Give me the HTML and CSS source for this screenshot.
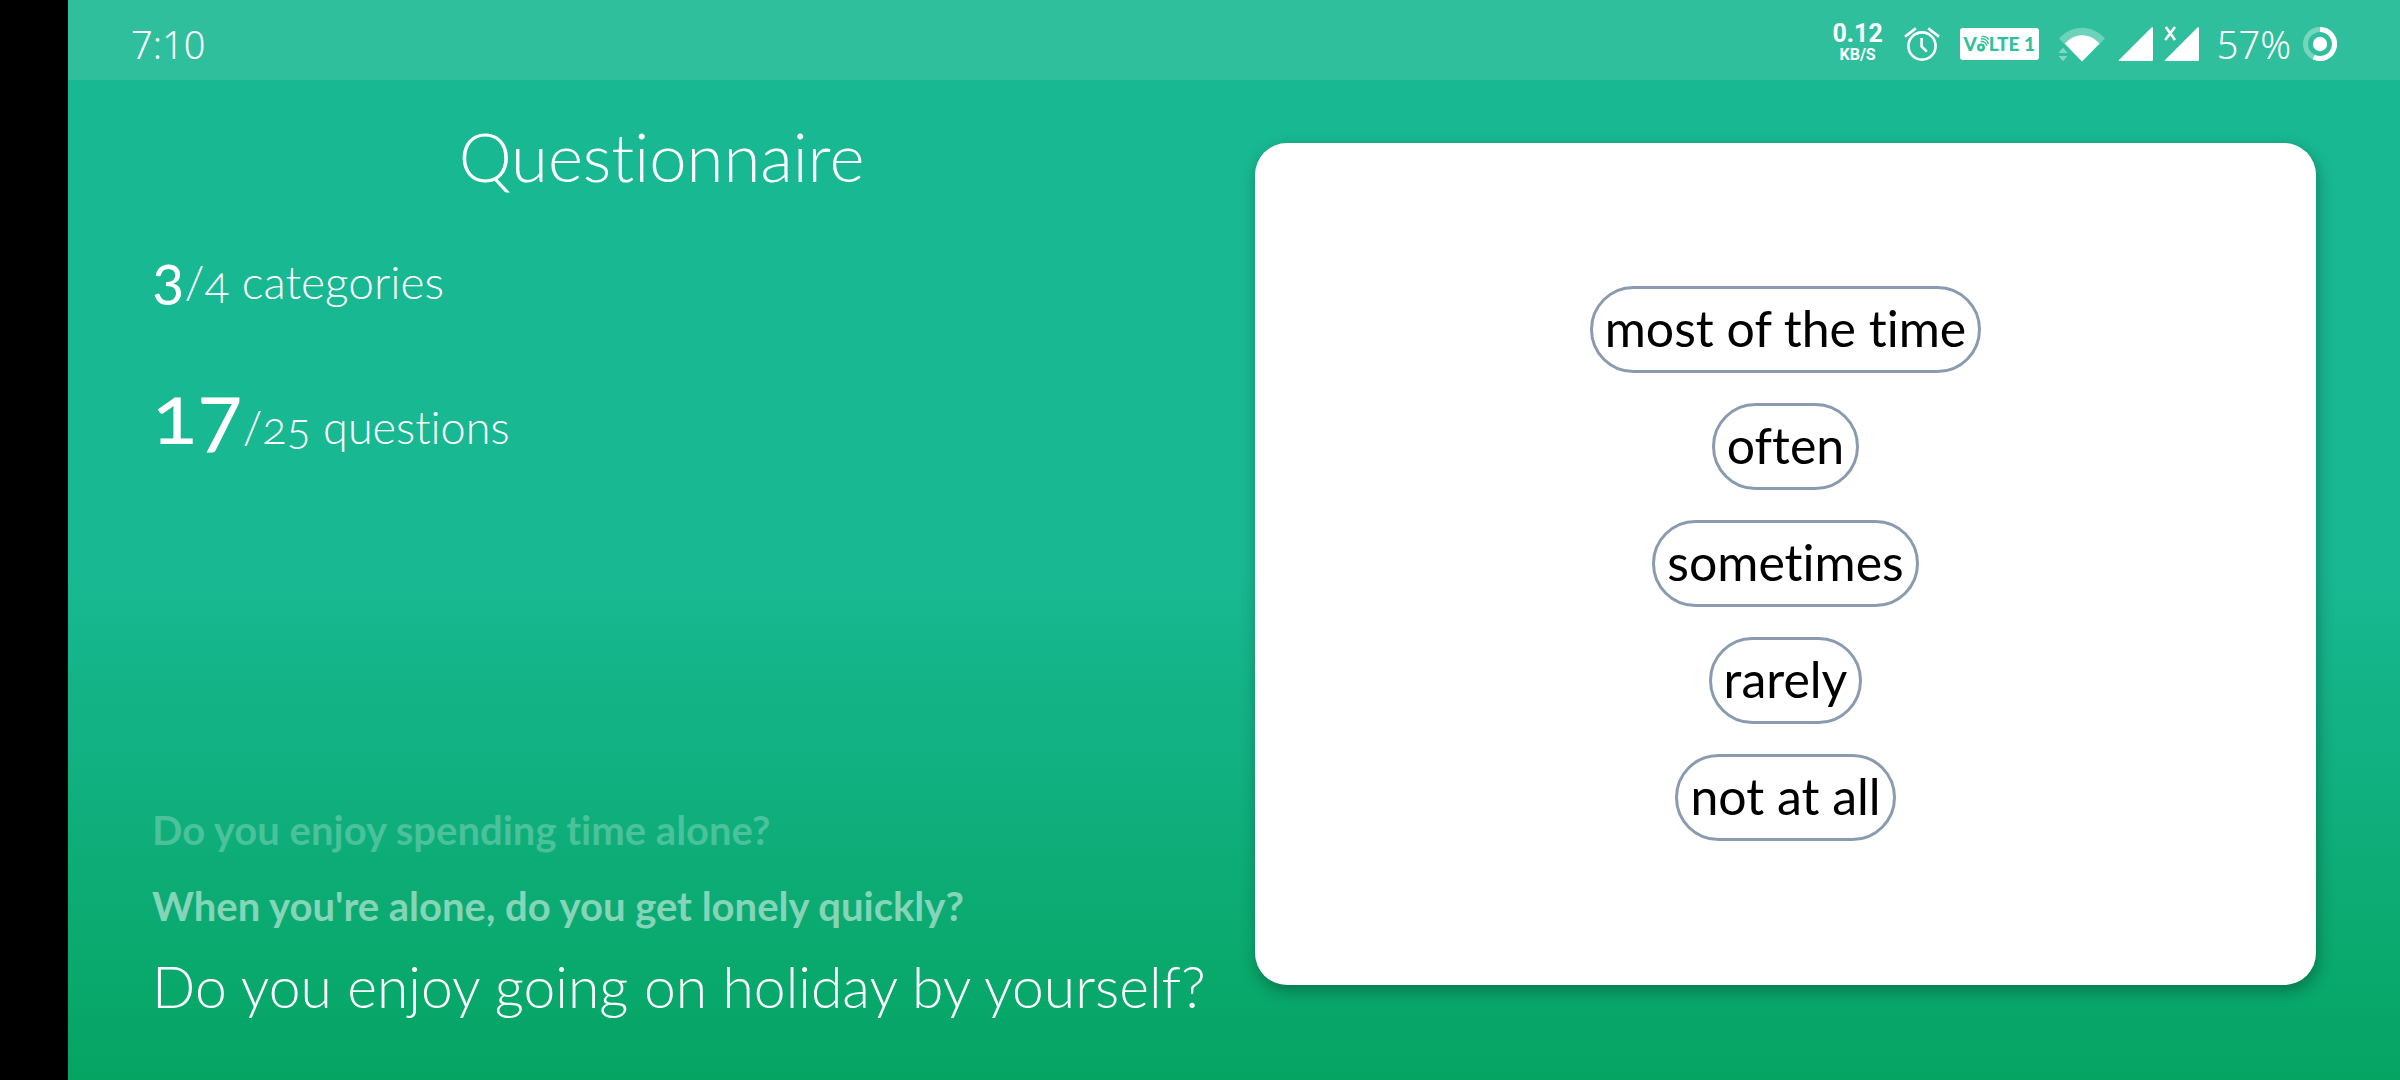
FILE: index.html
```html
<!DOCTYPE html>
<html lang="en">
<head>
<meta charset="utf-8">
<meta name="viewport" content="width=device-width, initial-scale=1">
<title>Questionnaire</title>
<link rel="stylesheet" href="styles.css">
</head>
<body>
<div class="screen">
  <header class="status">
    <time class="clock">7:10</time>
    <div class="indicators">
      <div class="speed"><span class="speed-value">0.12</span><span class="speed-unit">KB/S</span></div>
      <svg class="alarm" width="36" height="36" viewBox="0 0 36 36" fill="none" stroke="#fff" stroke-width="2.6" aria-hidden="true">
        <circle cx="18" cy="20" r="13.6"/>
        <path d="M17.6 12v8.4l5.2 5.2M1 10.6 11.8 2.4M24.2 2.4 35 10.6"/>
      </svg>
      <div class="volte">
        <span>V</span>
        <svg width="12" height="18" viewBox="0 0 12 18" fill="none" stroke="currentColor" aria-hidden="true">
          <circle cx="4" cy="12.4" r="2.7" stroke-width="2.6"/>
          <path d="M3.600 6.600c2.800-.6 5.400 1.400 6.200 4M4 3.900c3.600-.4 6.500 1.800 7.300 5" stroke-width="1.500"/>
          <path d="M4.500 1.600c3.500-.6 5.700.8 7.200 3" stroke-width="1.200"/>
        </svg>
        <span>LTE 1</span>
      </div>
      <svg class="wifi" width="48" height="36" viewBox="0 0 48 36" fill="#fff" aria-hidden="true">
        <path d="M1 12.500C14-1.800 34-1.800 47 12.500L24 35.500z" opacity=".3"/>
        <path d="M6.800 17.500C17 6.400 31.500 6.400 41.500 17.500L24 35.500z"/>
        <path d="M.5 27 5 21.500 9.500 27zM.5 30h9L5 35.300z" opacity=".4"/>
      </svg>
      <svg class="signal" width="35" height="36" viewBox="0 0 35 36" fill="#fff" aria-hidden="true">
        <path d="M33.500 1.600Q35 .4 35 2.400V33.500Q35 35 33.500 35H1.600Q0 35 1 34z"/>
      </svg>
      <svg class="signal-second" width="35" height="36" viewBox="0 0 35 36" fill="#fff" aria-hidden="true">
        <path d="M33.500 1.600Q35 .4 35 2.400V33.500Q35 35 33.500 35H1.600Q0 35 1 34z"/>
        <path d="M1.800 1 11 14M11 1 1.200 14" stroke="#fff" stroke-width="2.600"/>
      </svg>
      <span class="battery-level">57%</span>
      <svg class="battery" width="34" height="34" viewBox="0 0 34 34" fill="none" stroke="#fff" aria-hidden="true">
        <circle cx="17" cy="17" r="14.500" stroke-width="5" opacity=".35"/>
        <path d="M17 2.500a14.500 14.500 0 1 1-6.200 27.600" stroke-width="5"/>
        <circle cx="17" cy="17" r="7.200" fill="#fff" stroke="none"/>
      </svg>
    </div>
  </header>
  <main class="content">
    <section class="overview">
      <h1 class="title">Questionnaire</h1>
      <p class="progress categories"><span class="count">3</span>/4 categories</p>
      <p class="progress questions"><span class="count">17</span>/25 questions</p>
      <div class="history">
        <p class="past older">Do you enjoy spending time alone?</p>
        <p class="past">When you're alone, do you get lonely quickly?</p>
        <p class="current">Do you enjoy going on holiday by yourself?</p>
      </div>
    </section>
    <section class="card" aria-label="Answers">
      <button class="answer" type="button">most of the time</button>
      <button class="answer" type="button">often</button>
      <button class="answer" type="button">sometimes</button>
      <button class="answer" type="button">rarely</button>
      <button class="answer" type="button">not at all</button>
    </section>
  </main>
</div>
</body>
</html>
```
FILE: styles.css
```css
* {
  box-sizing: border-box;
}

body {
  margin: 0;
  background: #000;
  color: #fff;
  font-family: Lato, "Open Sans", sans-serif;
  font-variant-ligatures: none;
}

h1,
p {
  margin: 0;
  font-weight: 300;
}

.screen {
  display: flex;
  flex-direction: column;
  min-height: 100vh;
  margin-left: 68px;
  background: linear-gradient(180deg, #18b892 53%, #05a463 100%);
}

/* Status bar */

.status {
  display: flex;
  align-items: center;
  justify-content: space-between;
  height: 80px;
  padding: 8px 63px 0 63px;
  background: rgb(255 255 255 / 10%);
}

.clock,
.battery-level {
  font-family: "Noto Sans", sans-serif;
  font-size: 38px;
  font-weight: 300;
  line-height: 48px;
}

.indicators {
  display: flex;
  align-items: center;
}

.speed {
  display: flex;
  flex-direction: column;
  align-items: center;
  padding-bottom: 2px;
  font-family: Roboto, sans-serif;
  font-weight: 700;
}

.speed-value {
  font-size: 25px;
  line-height: 24px;
}

.speed-unit {
  font-size: 16px;
  line-height: 18px;
}

.alarm {
  margin-left: 21px;
}

.volte {
  display: flex;
  align-items: center;
  justify-content: center;
  width: 79px;
  height: 32px;
  margin-left: 20px;
  border-radius: 3px;
  background: #fff;
  color: #30c19c;
  font-family: Lato, sans-serif;
  font-size: 19px;
  font-weight: 900;
  line-height: 32px;
}

.wifi {
  margin-left: 19px;
}

.signal {
  margin-left: 12px;
}

.signal-second {
  margin-left: 11px;
}

.battery-level {
  margin-left: 18px;
}

.battery {
  margin-left: 12px;
}

/* Page */

.content {
  display: grid;
  flex: 1;
  grid-template-columns: 1187fr 1061fr;
  padding: 36px 84px 40px 0;
}

.overview {
  display: flex;
  flex-direction: column;
}

.title {
  font-size: 67px;
  line-height: 80px;
  text-align: center;
}

.progress {
  padding-left: 84px;
  font-size: 46px;
  font-variant-numeric: oldstyle-nums;
}

.count {
  font-weight: 400;
}

.categories {
  margin-top: 40px;
  line-height: 80px;
}

.categories .count {
  font-size: 60px;
}

.questions {
  margin-top: 30px;
  font-size: 45px;
  line-height: 120px;
}

.questions .count {
  font-size: 84px;
}

.history {
  display: flex;
  flex-direction: column;
  gap: 16px;
  margin-top: auto;
  padding: 0 0 20px 84px;
}

.past {
  color: rgb(255 255 255 / 50%);
  font-size: 40px;
  font-weight: 700;
  line-height: 60px;
}

.older {
  color: rgb(255 255 255 / 25%);
}

.current {
  font-size: 57px;
  line-height: 68px;
  white-space: nowrap;
}

.card {
  display: flex;
  flex-direction: column;
  align-items: center;
  justify-content: center;
  gap: 30px;
  margin: 27px 0 55px;
  padding-bottom: 2px;
  border-radius: 32px;
  background: #fff;
  box-shadow: 2px 6px 16px rgb(0 0 0 / 30%);
}

.answer {
  height: 87px;
  padding: 0 12px 2px;
  border: 3px solid #8a9bb0;
  border-radius: 44px;
  background: #fff;
  color: #000;
  font-family: inherit;
  font-size: 50px;
  font-variant-ligatures: none;
  font-weight: 400;
  line-height: 60px;
}
```
